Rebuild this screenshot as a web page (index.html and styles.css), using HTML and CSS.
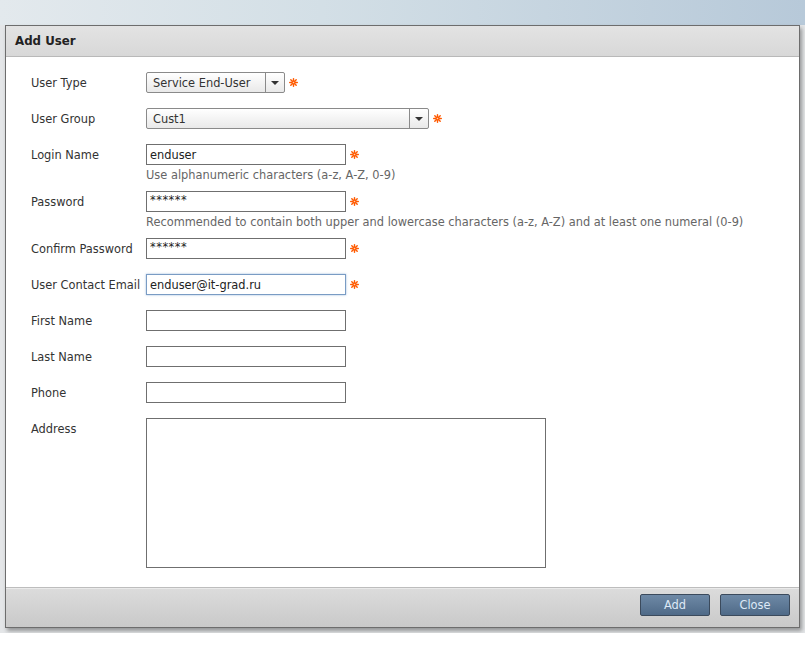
FILE: index.html
```html
<!DOCTYPE html>
<html>
<head>
<meta charset="utf-8">
<title>Add User</title>
<link rel="stylesheet" href="styles.css">
</head>
<body>
<div class="page">
  <div class="dialog">
    <div class="dlg-head">Add User</div>
    <div class="dlg-body">
      <div class="row">
        <div class="label">User Type</div>
        <div class="ctrl">
          <div class="line">
            <div class="select w-short"><span class="sel-text">Service End-User</span><span class="sel-btn"><span class="tri"></span></span></div>
            <svg class="req" viewBox="0 0 10 10"><g stroke="#ff5a00" stroke-width="1.6" stroke-linecap="round"><line x1="5" y1="0.8" x2="5" y2="9.2"/><line x1="0.8" y1="5" x2="9.2" y2="5"/><line x1="2" y1="2" x2="8" y2="8"/><line x1="8" y1="2" x2="2" y2="8"/></g><circle cx="5" cy="5" r="2.2" fill="#ff5a00"/><circle cx="5" cy="5" r="0.9" fill="#ffd0b0"/></svg>
          </div>
        </div>
      </div>
      <div class="row">
        <div class="label">User Group</div>
        <div class="ctrl">
          <div class="line">
            <div class="select w-long"><span class="sel-text">Cust1</span><span class="sel-btn"><span class="tri"></span></span></div>
            <svg class="req" viewBox="0 0 10 10"><g stroke="#ff5a00" stroke-width="1.6" stroke-linecap="round"><line x1="5" y1="0.8" x2="5" y2="9.2"/><line x1="0.8" y1="5" x2="9.2" y2="5"/><line x1="2" y1="2" x2="8" y2="8"/><line x1="8" y1="2" x2="2" y2="8"/></g><circle cx="5" cy="5" r="2.2" fill="#ff5a00"/><circle cx="5" cy="5" r="0.9" fill="#ffd0b0"/></svg>
          </div>
        </div>
      </div>
      <div class="row has-hint">
        <div class="label">Login Name</div>
        <div class="ctrl">
          <div class="line">
            <div class="input">enduser</div>
            <svg class="req" viewBox="0 0 10 10"><g stroke="#ff5a00" stroke-width="1.6" stroke-linecap="round"><line x1="5" y1="0.8" x2="5" y2="9.2"/><line x1="0.8" y1="5" x2="9.2" y2="5"/><line x1="2" y1="2" x2="8" y2="8"/><line x1="8" y1="2" x2="2" y2="8"/></g><circle cx="5" cy="5" r="2.2" fill="#ff5a00"/><circle cx="5" cy="5" r="0.9" fill="#ffd0b0"/></svg>
          </div>
          <div class="hint">Use alphanumeric characters (a-z, A-Z, 0-9)</div>
        </div>
      </div>
      <div class="row has-hint">
        <div class="label">Password</div>
        <div class="ctrl">
          <div class="line">
            <div class="input pw">******</div>
            <svg class="req" viewBox="0 0 10 10"><g stroke="#ff5a00" stroke-width="1.6" stroke-linecap="round"><line x1="5" y1="0.8" x2="5" y2="9.2"/><line x1="0.8" y1="5" x2="9.2" y2="5"/><line x1="2" y1="2" x2="8" y2="8"/><line x1="8" y1="2" x2="2" y2="8"/></g><circle cx="5" cy="5" r="2.2" fill="#ff5a00"/><circle cx="5" cy="5" r="0.9" fill="#ffd0b0"/></svg>
          </div>
          <div class="hint">Recommended to contain both upper and lowercase characters (a-z, A-Z) and at least one numeral (0-9)</div>
        </div>
      </div>
      <div class="row">
        <div class="label">Confirm Password</div>
        <div class="ctrl">
          <div class="line">
            <div class="input pw">******</div>
            <svg class="req" viewBox="0 0 10 10"><g stroke="#ff5a00" stroke-width="1.6" stroke-linecap="round"><line x1="5" y1="0.8" x2="5" y2="9.2"/><line x1="0.8" y1="5" x2="9.2" y2="5"/><line x1="2" y1="2" x2="8" y2="8"/><line x1="8" y1="2" x2="2" y2="8"/></g><circle cx="5" cy="5" r="2.2" fill="#ff5a00"/><circle cx="5" cy="5" r="0.9" fill="#ffd0b0"/></svg>
          </div>
        </div>
      </div>
      <div class="row">
        <div class="label">User Contact Email</div>
        <div class="ctrl">
          <div class="line">
            <div class="input focus">enduser@it-grad.ru</div>
            <svg class="req" viewBox="0 0 10 10"><g stroke="#ff5a00" stroke-width="1.6" stroke-linecap="round"><line x1="5" y1="0.8" x2="5" y2="9.2"/><line x1="0.8" y1="5" x2="9.2" y2="5"/><line x1="2" y1="2" x2="8" y2="8"/><line x1="8" y1="2" x2="2" y2="8"/></g><circle cx="5" cy="5" r="2.2" fill="#ff5a00"/><circle cx="5" cy="5" r="0.9" fill="#ffd0b0"/></svg>
          </div>
        </div>
      </div>
      <div class="row">
        <div class="label">First Name</div>
        <div class="ctrl"><div class="line"><div class="input"></div></div></div>
      </div>
      <div class="row">
        <div class="label">Last Name</div>
        <div class="ctrl"><div class="line"><div class="input"></div></div></div>
      </div>
      <div class="row">
        <div class="label">Phone</div>
        <div class="ctrl"><div class="line"><div class="input"></div></div></div>
      </div>
      <div class="row last">
        <div class="label">Address</div>
        <div class="ctrl"><div class="textarea"></div></div>
      </div>
    </div>
    <div class="dlg-foot">
      <button class="btn">Add</button>
      <button class="btn">Close</button>
    </div>
  </div>
</div>
</body>
</html>
```
FILE: styles.css
```css
html, body {
  margin: 0;
  padding: 0;
  background: #ffffff;
}
body {
  font-family: "DejaVu Sans", Verdana, sans-serif;
  font-size: 11.4px;
  color: #333;
}
.page {
  width: 805px;
  height: 633px;
  padding: 25px 5px 0 5px;
  box-sizing: border-box;
  background:
    linear-gradient(to bottom, rgba(0,0,0,0) 25px, #e4e6e8 25px),
    linear-gradient(to right, #e3e9ed 0%, #d3dfe6 40%, #b7c9d9 100%);
}
.dialog {
  width: 795px;
  height: 603px;
  box-sizing: border-box;
  border: 1px solid #6d6d6d;
  background: #fff;
  display: flex;
  flex-direction: column;
  box-shadow: 2px 3px 4px rgba(0, 0, 0, 0.35);
}
.dlg-head {
  height: 30px;
  line-height: 31px;
  padding-left: 9px;
  border-bottom: 1px solid #b9b9b9;
  background: linear-gradient(to bottom, #e3e3e3, #d8d8d8);
  font-weight: bold;
  font-size: 11.8px;
  color: #222;
}
.dlg-body {
  flex: 1;
  padding: 15px 0 0 25px;
}
.row {
  display: flex;
  margin-bottom: 15px;
}
.row.has-hint {
  margin-bottom: 9px;
}
.row.last {
  margin-bottom: 0;
}
.label {
  width: 115px;
  height: 21px;
  line-height: 23px;
  color: #333;
  white-space: nowrap;
}
.ctrl {
  display: flex;
  flex-direction: column;
}
.line {
  display: flex;
  align-items: center;
  height: 21px;
}
.req {
  width: 9px;
  height: 9px;
  margin-left: 4px;
}
.select {
  height: 21px;
  box-sizing: border-box;
  border: 1px solid #8a8a8a;
  border-radius: 2px;
  background: linear-gradient(to bottom, #ffffff, #e9e9e9);
  display: flex;
  align-items: stretch;
  color: #333;
}
.w-short { width: 139px; }
.w-long { width: 283px; }
.sel-text {
  flex: 1;
  line-height: 21px;
  height: 19px;
  padding-left: 6px;
}
.sel-btn {
  width: 18px;
  border-left: 1px solid #8a8a8a;
  display: flex;
  align-items: center;
  justify-content: center;
}
.tri {
  width: 0;
  height: 0;
  border-left: 4px solid transparent;
  border-right: 4px solid transparent;
  border-top: 4px solid #333;
  margin-top: 1px;
}
.input {
  width: 200px;
  height: 21px;
  box-sizing: border-box;
  border: 1px solid #6f6f6f;
  padding-left: 3px;
  line-height: 21px;
  color: #222;
  background: #fff;
}
.input.pw {
  letter-spacing: 0.5px;
  line-height: 16px;
}
.input.focus {
  border-color: #7a9cc4;
  box-shadow: 0 0 2px rgba(90, 140, 200, 0.6);
}
.hint {
  color: #666;
  line-height: 13px;
  margin-top: 4px;
  white-space: nowrap;
}
.textarea {
  width: 400px;
  height: 150px;
  box-sizing: border-box;
  border: 1px solid #6f6f6f;
  background: #fff;
}
.dlg-foot {
  height: 40px;
  box-sizing: border-box;
  border-top: 1px solid #bdbdbd;
  box-shadow: inset 0 1px 0 #eaeaea;
  background: linear-gradient(to bottom, #dcdcdc, #c9c9c9);
  display: flex;
  justify-content: flex-end;
  align-items: flex-start;
  gap: 10px;
  padding: 6px 9px 0 0;
}
.btn {
  width: 70px;
  height: 22px;
  border: 1px solid #3b4a5c;
  border-radius: 2px;
  background: linear-gradient(to bottom, #6e89a6, #4f6a88);
  color: #dde9f6;
  font-family: "DejaVu Sans", Verdana, sans-serif;
  font-size: 11.4px;
  padding: 0;
  cursor: pointer;
}
```
